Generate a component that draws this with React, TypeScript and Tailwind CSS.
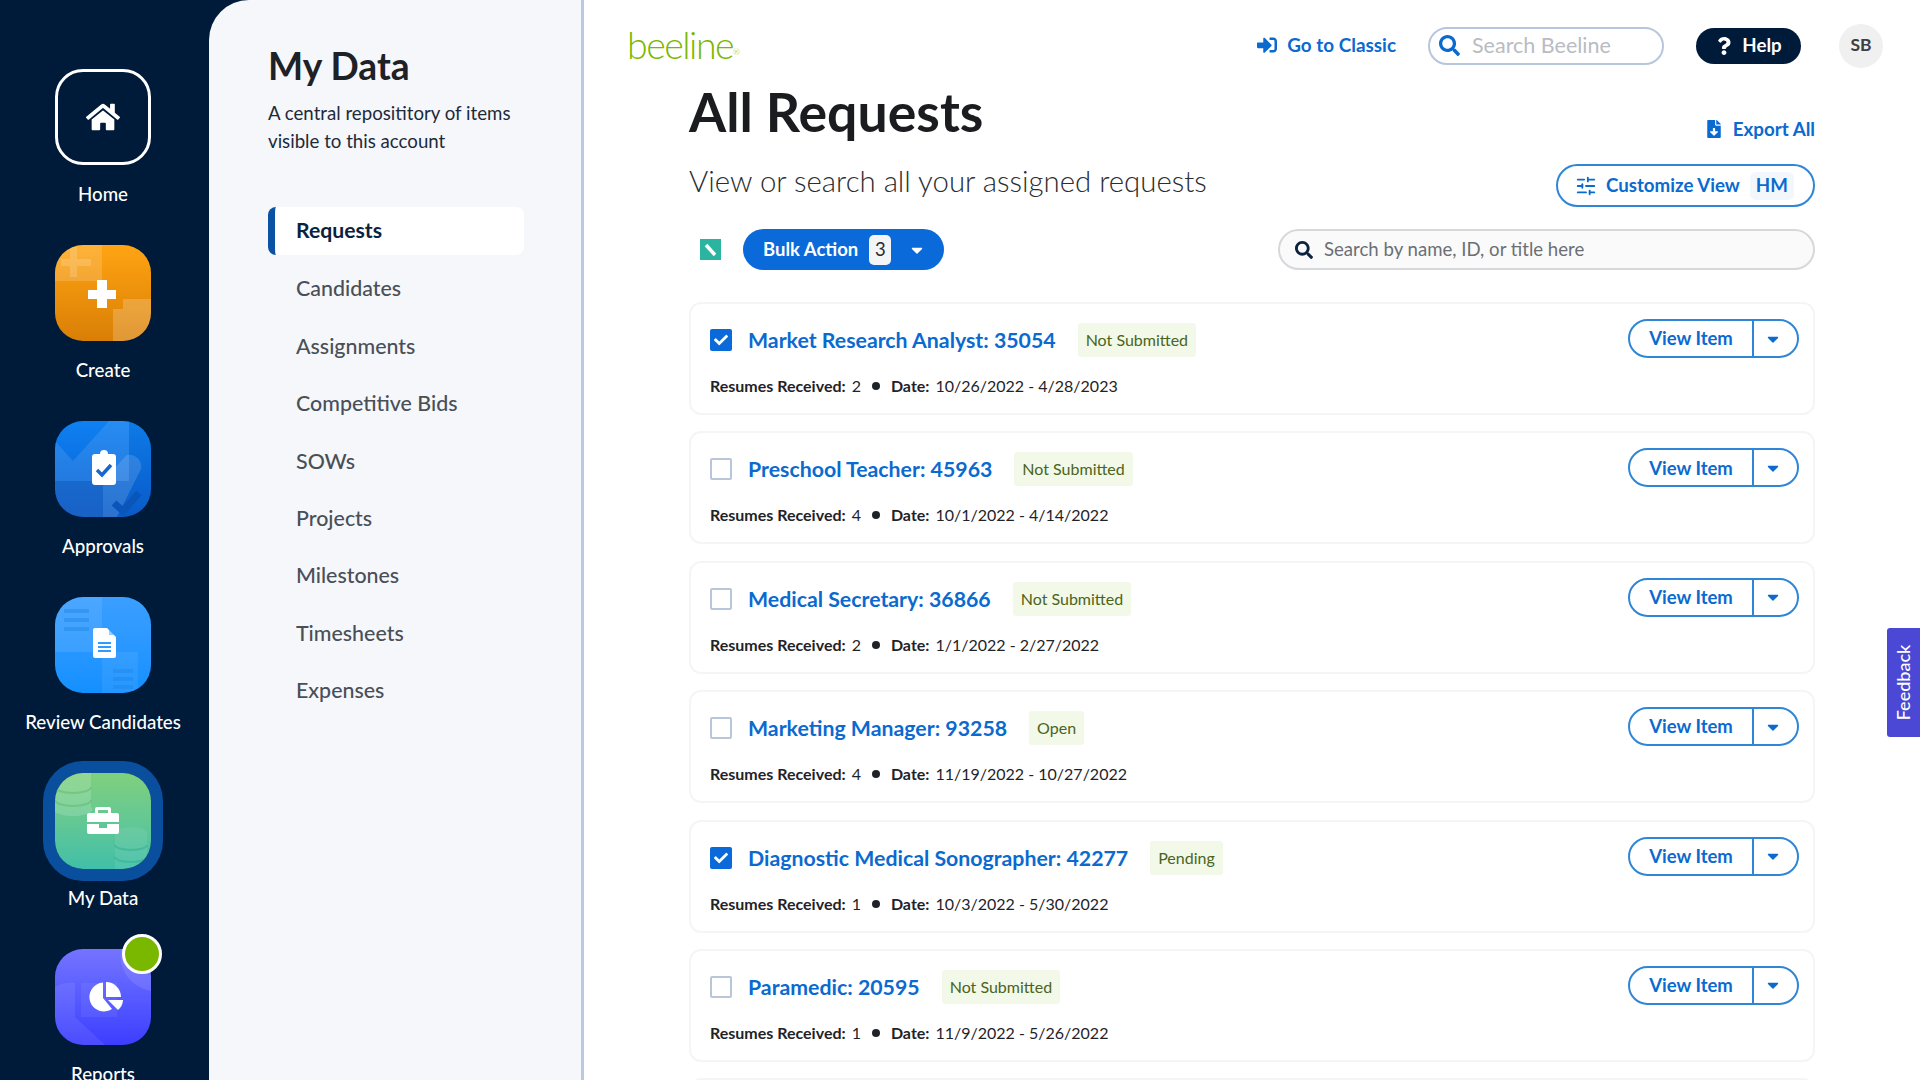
import { SlidersHorizontal } from "lucide-react";
import {
  FaCaretDown,
  FaCheck,
  FaFileDownload,
  FaHome,
  FaQuestion,
  FaSearch,
  FaSignInAlt,
} from "react-icons/fa";

const navItems = [
  "Requests",
  "Candidates",
  "Assignments",
  "Competitive Bids",
  "SOWs",
  "Projects",
  "Milestones",
  "Timesheets",
  "Expenses",
];

const requests = [
  { title: "Market Research Analyst: 35054", status: "Not Submitted", resumes: 2, date: "10/26/2022 - 4/28/2023", checked: true },
  { title: "Preschool Teacher: 45963", status: "Not Submitted", resumes: 4, date: "10/1/2022 - 4/14/2022", checked: false },
  { title: "Medical Secretary: 36866", status: "Not Submitted", resumes: 2, date: "1/1/2022 - 2/27/2022", checked: false },
  { title: "Marketing Manager: 93258", status: "Open", resumes: 4, date: "11/19/2022 - 10/27/2022", checked: false },
  { title: "Diagnostic Medical Sonographer: 42277", status: "Pending", resumes: 1, date: "10/3/2022 - 5/30/2022", checked: true },
  { title: "Paramedic: 20595", status: "Not Submitted", resumes: 1, date: "11/9/2022 - 5/26/2022", checked: false },
];

function CreateArt() {
  return (
    <svg viewBox="0 0 96 96" className="h-24 w-24">
      <path d="M0 36V0h47v36z" fill="#fff" fillOpacity=".16" />
      <path d="M6 14h9V2h7v12h14v7H22v11h-7V21H6z" fill="#fff" fillOpacity=".16" />
      <path d="M58 96V64h10V54h28v42z" fill="#fff" fillOpacity=".2" />
      <path d="M33 45h9v-10h10v10h9v9h-9v9h-10v-9h-9z" fill="#fff" />
    </svg>
  );
}

function ApprovalsArt() {
  return (
    <svg viewBox="0 0 96 96" className="h-24 w-24">
      <path d="M0 20l18 20L54 0h20v60H48v36H0z" fill="#fff" fillOpacity=".1" />
      <path d="M48 60h26V0h22v96H48z" fill="#000" fillOpacity=".04" />
      <path d="M0 60h48v36H0z" fill="#003c9e" fillOpacity=".28" />
      <path d="M48 96V60l20-22 4-4a12 12 0 0 1 14 14L62 96z" fill="#fff" fillOpacity=".14" />
      <path d="M59 82l9 8 16-18" fill="none" stroke="#0a55ba" strokeWidth="7" />
      <path d="M40 33h5a4 4 0 0 1 8 0h5a3 3 0 0 1 3 3v25a3 3 0 0 1-3 3H40a3 3 0 0 1-3-3V36a3 3 0 0 1 3-3z" fill="#fff" />
      <path d="M42 49l5 5 9-10" fill="none" stroke="#1668cf" strokeWidth="3.5" />
    </svg>
  );
}

function ReviewArt() {
  return (
    <svg viewBox="0 0 96 96" className="h-24 w-24">
      <path d="M0 0h47v55H0z" fill="#fff" fillOpacity=".09" />
      <path d="M47 55h36l0 41H47z" fill="#fff" fillOpacity=".07" />
      <path d="M9 12h25v4H9zM9 21h25v4H9zM9 30h25v4H9z" fill="#1f86e6" fillOpacity=".45" />
      <path d="M58 72h20v4H58zM58 80h20v4H58zM58 88h20v4H58z" fill="#1f86e6" fillOpacity=".45" />
      <path d="M38 33a2 2 0 0 1 2-2h12l9 9v19a2 2 0 0 1-2 2H40a2 2 0 0 1-2-2z" fill="#fff" />
      <path d="M43 45h13v2H43zM43 49h13v2H43zM43 53h13v2H43z" fill="#2f9bff" />
      <path d="M54 31l7 7h-7z" fill="#2f9bff" fillOpacity=".5" />
    </svg>
  );
}

function MyDataArt() {
  return (
    <svg viewBox="0 0 96 96" className="h-24 w-24">
      <path d="M0 0h36v34a18 6 0 0 1-36 5z" fill="#fff" fillOpacity=".16" />
      <path d="M0 14a18 6 0 0 0 36 0M0 27a18 6 0 0 0 36 0" fill="none" stroke="#60bb70" strokeOpacity=".55" strokeWidth="2" />
      <path d="M60 60a16 6 0 0 1 32 0v36H60z" fill="#fff" fillOpacity=".08" />
      <path d="M60 72a16 5 0 0 0 32 0M60 84a16 5 0 0 0 32 0" fill="none" stroke="#36b294" strokeOpacity=".6" strokeWidth="2" />
      <path d="M40 40v-4a2 2 0 0 1 2-2h12a2 2 0 0 1 2 2v4h6a2 2 0 0 1 2 2v7H32v-7a2 2 0 0 1 2-2zm3-3v3h10v-3z" fill="#fff" fillRule="evenodd" />
      <path d="M32 51h12v4h8v-4h12v8a2 2 0 0 1-2 2H34a2 2 0 0 1-2-2z" fill="#fff" />
    </svg>
  );
}

function ReportsArt() {
  return (
    <svg viewBox="0 0 96 96" className="h-24 w-24">
      <path d="M0 38a30 30 0 0 1 20-4v34l30 28H18L0 78z" fill="#fff" fillOpacity=".08" />
      <path d="M26 34h36v34H26z" fill="#fff" fillOpacity=".06" />
      <path d="M66 0h30v42A36 36 0 0 1 66 0z" fill="#fff" fillOpacity=".1" />
      <path d="M48 33.5V49l9 11a14.5 14.5 0 1 1-9-26.500z" fill="#fff" />
      <path d="M51 33a15 15 0 0 1 15 15H51z" fill="#fff" />
      <path d="M53 51h15a14 14 0 0 1-5 10z" fill="#fff" />
    </svg>
  );
}

function SidebarTile({
  label,
  tileClass,
  children,
  dot = false,
}: {
  label: string;
  tileClass: string;
  children: React.ReactNode;
  dot?: boolean;
}) {
  return (
    <div className="flex h-[176px] flex-col items-center">
      <div className={`relative flex h-24 w-24 items-center justify-center rounded-[28px] ${tileClass}`}>
        <div className="absolute inset-0 overflow-hidden rounded-[28px]">{children}</div>
        {dot && (
          <span className="absolute -right-[11px] -top-[15px] h-10 w-10 rounded-full border-[3px] border-white bg-[#7ab800]" />
        )}
      </div>
      <span className="mt-[18px] whitespace-nowrap text-[18.7px] font-medium leading-[22px] text-white">{label}</span>
    </div>
  );
}

function RequestCard({ request }: { request: (typeof requests)[number] }) {
  return (
    <div className="flex h-[113px] items-start justify-between rounded-xl border-2 border-[#f5f5f6] bg-white pl-[19px] pr-[14px]">
      <div className="mt-[19px]">
        <div className="flex h-[34px] items-center">
          {request.checked ? (
            <span className="flex h-[22px] w-[22px] items-center justify-center rounded-[2px] bg-[#0a6ad9] text-white">
              <FaCheck size={14} />
            </span>
          ) : (
            <span className="h-[22px] w-[22px] rounded-[2px] border-2 border-[#b9c6da] bg-white" />
          )}
          <a className="ml-4 text-[21.3px] font-bold leading-[34px] text-[#0a6ad0]">{request.title}</a>
          <span className="ml-[22px] flex h-[34px] items-center rounded-[3px] bg-[#f2f9e8] px-2 text-[16px] text-[#4b6420]">
            {request.status}
          </span>
        </div>
        <div className="mt-[17px] flex items-center text-[16px] leading-6 text-[#1f2328]">
          <span className="font-bold">Resumes Received:</span>
          <span className="ml-1.5">{request.resumes}</span>
          <span className="mx-[11px] h-2 w-2 rounded-full bg-[#1f2328]" />
          <span className="font-bold">Date:</span>
          <span className="ml-1.5">{request.date}</span>
        </div>
      </div>
      <div className="mt-[15px] flex h-[39px] w-[171px] rounded-full border-2 border-[#2f86d6] bg-white">
        <button className="w-[124px] border-r-2 border-[#2f86d6] text-[18.5px] font-bold leading-none text-[#0a6ad0]">
          View Item
        </button>
        <button className="flex flex-1 items-center justify-center pr-1.5 text-[#0a6ad0]">
          <FaCaretDown size={18} />
        </button>
      </div>
    </div>
  );
}

export default function App() {
  return (
    <div className="flex h-screen w-full overflow-hidden bg-[#001a3a] font-[family-name:Lato,sans-serif]">
      <aside className="w-[209px] shrink-0 pr-[3px] pt-[69px]">
        <div className="flex flex-col items-center">
          <div className="flex h-[176px] flex-col items-center">
            <div className="flex h-24 w-24 items-center justify-center rounded-[28px] border-[3px] border-white text-white">
              <FaHome size={34} />
            </div>
            <span className="mt-[18px] text-[18.7px] font-medium leading-[22px] text-white">Home</span>
          </div>
          <SidebarTile label="Create" tileClass="bg-gradient-to-b from-[#ffa412] to-[#d97f06]">
            <CreateArt />
          </SidebarTile>
          <SidebarTile label="Approvals" tileClass="bg-gradient-to-b from-[#0f80f2] to-[#0a5fd0]">
            <ApprovalsArt />
          </SidebarTile>
          <SidebarTile label="Review Candidates" tileClass="bg-gradient-to-b from-[#3a9fff] to-[#1290ff]">
            <ReviewArt />
          </SidebarTile>
          <SidebarTile
            label="My Data"
            tileClass="bg-gradient-to-b from-[#7fd07c] to-[#40bfa8] shadow-[0_0_0_12px_#0a4f9e]"
          >
            <MyDataArt />
          </SidebarTile>
          <SidebarTile label="Reports" tileClass="bg-gradient-to-b from-[#7573ff] to-[#3d3cff]" dot>
            <ReportsArt />
          </SidebarTile>
        </div>
      </aside>

      <nav className="w-[375px] shrink-0 rounded-tl-[40px] border-r-[3px] border-[#bccae0] bg-[#f5f7fb] pl-[59px] pt-[43px]">
        <h2 className="text-[37.2px] font-bold leading-[46px] text-[#1e2126]">My Data</h2>
        <p className="mt-[10px] w-[270px] text-[18.66px] leading-[28px] text-[#1d2a3a]">
          A central reposititory of items visible to this account
        </p>
        <ul className="mt-[52px] w-[256px]">
          {navItems.map((item, i) =>
            i === 0 ? (
              <li
                key={item}
                className="flex h-[48px] items-center rounded-lg border-l-[7px] border-[#0a52a3] bg-white pl-[21px] text-[21.2px] font-bold text-[#0a2240]"
              >
                {item}
              </li>
            ) : (
              <li key={item} className="mt-[9.4px] flex h-[48px] items-center pl-[28px] text-[21.4px] font-medium text-[#4a4f57]">
                {item}
              </li>
            )
          )}
        </ul>
      </nav>

      <main className="min-w-0 flex-1 bg-white">
        <header className="flex h-[83px] items-center pl-[43px] pr-[37px] pt-[8px]">
          <span className="-mt-[2px] text-[37.5px] font-light leading-none tracking-[-1.5px] text-[#7ab800]">
            beeline<sup className="text-[8px] tracking-normal">®</sup>
          </span>
          <a className="ml-auto flex items-center gap-[10px] text-[18.9px] font-bold text-[#0a6ad0]">
            <FaSignInAlt size={20} />
            Go to Classic
          </a>
          <div className="ml-8 flex h-[38px] w-[236px] items-center rounded-full border-2 border-[#b7c6dc] pl-[9px]">
            <FaSearch size={21} className="text-[#0a6ad0]" />
            <span className="ml-3 text-[21.5px] text-[#b9bcc2]">Search Beeline</span>
          </div>
          <button className="ml-8 flex h-9 w-[105px] items-center justify-center gap-[9px] rounded-full bg-[#001a3a] text-[18.7px] font-bold text-white">
            <FaQuestion size={18} />
            Help
          </button>
          <span className="ml-[38px] flex h-11 w-11 items-center justify-center rounded-full bg-[#f0f0f0] text-[17.5px] font-bold text-[#3c4046]">
            SB
          </span>
        </header>

        <section className="ml-[105px] w-[1126px]">
          <div className="flex h-[60px] items-start justify-between">
            <h1 className="text-[53.6px] font-bold leading-[56px] text-[#1a1c1f]">All Requests</h1>
            <a className="mt-[33px] flex items-center gap-[10px] text-[18.8px] font-bold leading-[26px] text-[#0a6ad0]">
              <FaFileDownload size={18} />
              Export All
            </a>
          </div>

          <div className="mt-[21px] flex items-start justify-between">
            <p className="text-[29.4px] font-light leading-[33px] text-[#2a2d31]">
              View or search all your assigned requests
            </p>
            <button className="flex h-[43px] w-[259px] items-center rounded-full border-2 border-[#2f86d6] pl-[17px] text-[18.7px] font-bold text-[#0a6ad0]">
              <SlidersHorizontal size={22} />
              <span className="ml-[9px]">Customize View</span>
              <span className="ml-[10px] flex h-7 w-11 items-center justify-center rounded-md bg-[#f3f6fb]">HM</span>
            </button>
          </div>

          <div className="mt-[22px] flex h-[41px] items-center">
            <svg viewBox="0 0 21 21" className="ml-[11px] h-[21px] w-[21px]">
              <rect width="21" height="21" fill="#2bb5a0" />
              <path d="M6 6l9 10" stroke="#fff" strokeWidth="3.500" />
            </svg>
            <button className="ml-[22px] flex h-[41px] w-[201px] items-center rounded-full bg-[#0a6ad9] pl-5 text-[18.5px] font-bold text-white">
              Bulk Action
              <span className="ml-[11px] flex h-[30px] w-[22px] items-center justify-center rounded-[5px] bg-[#f3f5f7] font-normal text-[#2a2d31]">
                3
              </span>
              <FaCaretDown size={18} className="ml-[17px]" />
            </button>
            <div className="ml-auto flex h-[41px] w-[537px] items-center rounded-full border-2 border-[#d6d8db] bg-[#fafafa] pl-[15px]">
              <FaSearch size={18} className="text-[#0b2340]" />
              <span className="ml-[11px] text-[18.6px] text-[#6b6f75]">Search by name, ID, or title here</span>
            </div>
          </div>

          <div className="mt-[32px] flex flex-col gap-[16.4px]">
            {requests.map((request) => (
              <RequestCard key={request.title} request={request} />
            ))}
            <div className="h-[112px] rounded-xl border-2 border-[#f5f5f6] bg-white" />
          </div>
        </section>
      </main>

      <div className="fixed right-0 top-[628px] flex h-[109px] w-[33px] items-center justify-center rounded-l-[3px] bg-[#4b48d6]">
        <span className="-rotate-90 text-[18px] font-medium text-white">Feedback</span>
      </div>
    </div>
  );
}
